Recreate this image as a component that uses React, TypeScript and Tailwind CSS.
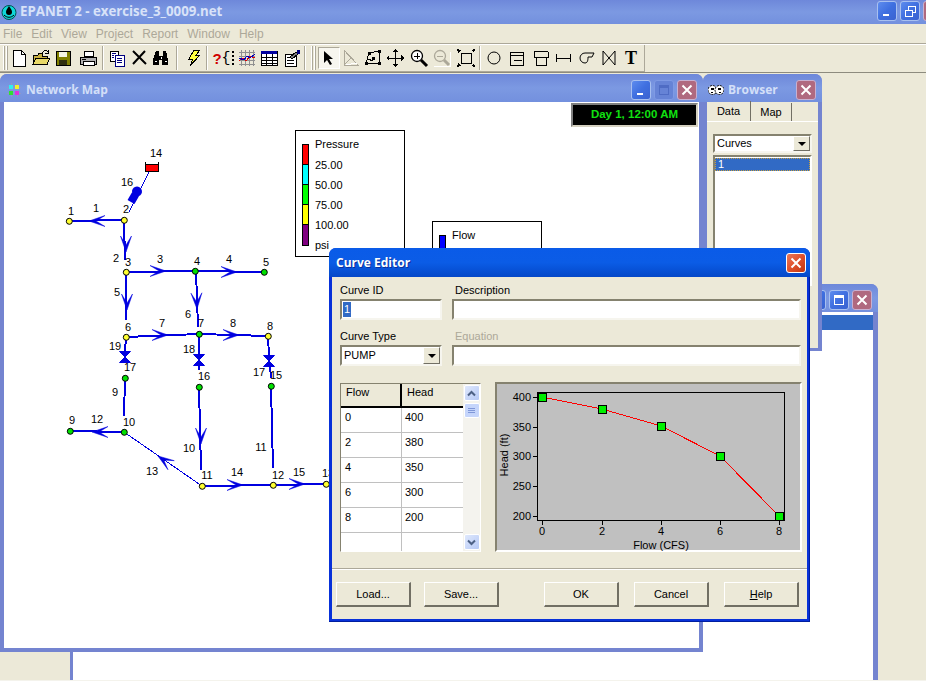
import type { ReactNode } from "react";

const stroke = "#0000e0";

function Icon({ children }: { children: ReactNode }) {
  return (
    <svg width="20" height="20" viewBox="0 0 20 20" shapeRendering="crispEdges">
      {children}
    </svg>
  );
}

function Tool({ className = "", pressed, children }: { className?: string; pressed?: boolean; children: ReactNode }) {
  return (
    <div
      className={`flex h-[22px] w-[22px] shrink-0 items-center justify-center ${
        pressed
          ? "border border-b-white border-l-[#aca899] border-r-white border-t-[#aca899] bg-[#f7f6ef]"
          : ""
      } ${className}`}
    >
      {children}
    </div>
  );
}

function Sep({ className = "" }: { className?: string }) {
  return <div className={`h-[24px] w-[2px] shrink-0 border-l border-r border-l-[#aca899] border-r-white ${className}`} />;
}

function Grip({ className = "" }: { className?: string }) {
  return (
    <div className={`flex h-[24px] w-[5px] shrink-0 justify-between ${className}`}>
      <div className="w-[2px] border-l border-r border-l-white border-r-[#aca899]" />
      <div className="w-[2px] border-l border-r border-l-white border-r-[#aca899]" />
    </div>
  );
}

function Toolbar() {
  return (
    <div className="flex h-[28px] items-center border-t border-t-white">
      <div className="flex h-[27px] w-[645px] items-center border-b border-r border-b-[#aca899] border-r-[#aca899] pl-[3px]">
        <Grip />
        <Tool>
          <Icon>
            <path d="M4 2h8l4 4v12H4z" fill="#fff" stroke="#000" />
            <path d="M12 2v4h4" fill="none" stroke="#000" />
          </Icon>
        </Tool>
        <Tool>
          <Icon>
            <path d="M2 16V7h5l1-2h3v3h5v8z" fill="#c8b040" stroke="#000" />
            <path d="M2 16l3-6h14l-3 6z" fill="#e8d868" stroke="#000" />
            <path d="M11 5c2-3 5-3 6-1M17 2v3h-3" fill="none" stroke="#000" />
          </Icon>
        </Tool>
        <Tool>
          <Icon>
            <path d="M3 3h14v14H3z" fill="#808000" stroke="#000" />
            <path d="M6 4h8v5H6z" fill="#f4f4e4" />
            <path d="M6 12h8v5H6z" fill="#303010" />
          </Icon>
        </Tool>
        <Tool className="ml-[3px]">
          <Icon>
            <path d="M6 3h9v5H6z" fill="#fff" stroke="#000" />
            <path d="M2 9h16v7H2z" fill="#b0b0b0" stroke="#000" />
            <path d="M5 13h11v4H5z" fill="#fff" stroke="#000" />
            <path d="M4 11h4" stroke="#000" />
          </Icon>
        </Tool>
        <Sep className="ml-[3px]" />
        <Tool className="ml-[2px]">
          <Icon>
            <path d="M3 3h8v10H3z" fill="#fff" stroke="#000" />
            <path d="M8 7h9v11H8z" fill="#fff" stroke="#000080" />
            <path d="M5 5h4M5 7h2M5 9h2M10 10h5M10 12h5M10 14h5" stroke="#000080" />
          </Icon>
        </Tool>
        <Tool>
          <Icon>
            <path d="M4 3l13 13M16 3L4 16" stroke="#000" strokeWidth="2" shapeRendering="auto" />
          </Icon>
        </Tool>
        <Tool>
          <Icon>
            <path d="M5 3h3v5h4V3h3l2 9v5h-6v-5H8v5H2v-5z" fill="#000" />
            <path d="M4 13h2M14 13h2M10 9v2" stroke="#fff" />
          </Icon>
        </Tool>
        <Sep className="ml-[4px]" />
        <Tool className="ml-[4px]">
          <Icon>
            <path d="M11 2h6l-4 5h4L7 18l3-7H6z" fill="#ffff40" stroke="#000" />
          </Icon>
        </Tool>
        <Sep className="ml-[2px]" />
        <Tool className="ml-[4px]">
          <span className="font-['Liberation_Sans',sans-serif] text-[15px] font-bold leading-none text-[#d00000]">?</span>
          <span className="font-['Liberation_Mono',monospace] text-[15px] leading-none text-black">{"{"}</span>
          <div className="ml-px h-[14px] border-l-2 border-dotted border-black" />
        </Tool>
        <Tool className="ml-[2px]">
          <Icon>
            <path d="M2 4h16M2 8h16M2 12h16M2 16h16M4 2v16M8 2v16M12 2v16M16 2v16" stroke="#909090" />
            <path d="M2 13l4-3 3 3 4-5 5 2" fill="none" stroke="#e00000" />
            <path d="M2 10l5 2 3-4 3 2 5-4" fill="none" stroke="#0000c0" />
          </Icon>
        </Tool>
        <Tool>
          <Icon>
            <path d="M2 3h16v14H2z" fill="#fff" stroke="#000" />
            <path d="M2 3h16v3H2z" fill="#0000a0" />
            <path d="M2 9h16M2 12h16M2 15h16M7 6v11M13 6v11" stroke="#000" />
          </Icon>
        </Tool>
        <Tool className="ml-px">
          <Icon>
            <path d="M3 6h11v12H3z" fill="#fff" stroke="#000" />
            <path d="M5 9h7M5 12h7M5 15h7" stroke="#000" />
            <path d="M8 9l6-5 2 2-6 5z" fill="#808080" stroke="#000" />
            <path d="M15 2h3v4h-3z" fill="#000080" />
          </Icon>
        </Tool>
        <Sep className="ml-px" />
        <Grip className="ml-[5px]" />
        <Tool pressed className="ml-[2px]">
          <svg width="14" height="16" viewBox="0 0 14 16">
            <path d="M2 1v12l3-3 3 5 2-1-3-5h4z" fill="#000" />
          </svg>
        </Tool>
        <Tool>
          <Icon>
            <path d="M3 2v15h14z" fill="none" stroke="#aca899" />
            <path d="M3 2l7 8-7 7" fill="none" stroke="#aca899" />
            <path d="M5 17l11-2" stroke="#fff" />
          </Icon>
        </Tool>
        <Tool>
          <Icon>
            <path d="M3 15l3-10 11-2-1 12z" fill="none" stroke="#000" />
            <path d="M5 11l5 2" stroke="#000" />
            <path d="M2 14h3v3H2zM5 4h3v3H5zM15 2h3v3h-3zM15 14h3v3h-3zM9 9h3v3H9z" fill="#000" />
          </Icon>
        </Tool>
        <Tool>
          <Icon>
            <path d="M10 2v16M2 10h16" stroke="#000" />
            <path d="M10 1l3 3H7zM10 19l-3-3h6zM1 10l3-3v6zM19 10l-3 3V7z" fill="#000" />
          </Icon>
        </Tool>
        <Tool className="ml-[2px]">
          <Icon>
            <circle cx="8" cy="8" r="5.5" fill="#fff" stroke="#000" strokeWidth="1.3" shapeRendering="auto" />
            <path d="M8 5v6M5 8h6" stroke="#000" />
            <path d="M12 12l6 6" stroke="#000" strokeWidth="3" shapeRendering="auto" />
          </Icon>
        </Tool>
        <Tool className="ml-px">
          <Icon>
            <path d="M2 18h16V4" fill="none" stroke="#fff" />
            <circle cx="8" cy="8" r="5.5" fill="none" stroke="#aca899" strokeWidth="1.3" shapeRendering="auto" />
            <path d="M5 8h6" stroke="#aca899" />
            <path d="M12 12l5 5" stroke="#aca899" strokeWidth="3" shapeRendering="auto" />
          </Icon>
        </Tool>
        <Tool className="ml-[2px]">
          <Icon>
            <path d="M5 5h10v10H5z" fill="none" stroke="#000" />
            <path d="M1 1l4 1-3 3zM19 1l-1 4-3-3zM1 19l1-4 3 3zM19 19l-4-1 3-3z" fill="#000" />
          </Icon>
        </Tool>
        <Sep className="ml-[2px]" />
        <Tool className="ml-[2px]">
          <Icon>
            <circle cx="10" cy="10" r="6" fill="none" stroke="#000" shapeRendering="auto" />
          </Icon>
        </Tool>
        <Tool className="ml-px">
          <Icon>
            <path d="M3 4h13v13H3zM3 7h13M7 12h8" fill="none" stroke="#000" />
          </Icon>
        </Tool>
        <Tool className="ml-[2px]">
          <Icon>
            <path d="M3 4q0-1 1-1h12q1 0 1 1v5H3zM5 9h10v8H5z" fill="none" stroke="#000" />
          </Icon>
        </Tool>
        <Tool>
          <Icon>
            <path d="M3 6v8M17 6v8M3 10h14" stroke="#000" />
          </Icon>
        </Tool>
        <Tool className="ml-px">
          <Icon>
            <path d="M18 5H9a5 5 0 0 0 0 10c3 0 3-4 3-6h4z" fill="none" stroke="#000" shapeRendering="auto" />
          </Icon>
        </Tool>
        <Tool className="ml-px">
          <Icon>
            <path d="M4 3v14l12-14v14z" fill="none" stroke="#000" shapeRendering="auto" />
          </Icon>
        </Tool>
        <Tool>
          <span className="font-['Liberation_Serif',serif] text-[18px] font-bold leading-none text-black">T</span>
        </Tool>
      </div>
    </div>
  );
}

function WinBtn({ kind, tone }: { kind: "min" | "max" | "restore" | "close"; tone: "app" | "child" | "faded" | "active" }) {
  const bg =
    kind === "close"
      ? tone === "active"
        ? "bg-gradient-to-br from-[#e8785a] via-[#e0502a] to-[#c03510] border-white"
        : "bg-[#b0697f] border-[#c8b0d0]"
      : tone === "faded"
        ? "bg-[#6683d6] border-[#7f9ae4]"
        : "bg-gradient-to-br from-[#5e8cee] via-[#3f6fe0] to-[#3a62d0] border-[#a8c0f0]";
  return (
    <div className={`relative flex h-[20px] w-[20px] shrink-0 items-center justify-center rounded-[3px] border ${bg}`}>
      <svg width="14" height="14" viewBox="0 0 14 14" shapeRendering="crispEdges">
        {kind === "min" && <path d="M3 10h6v2H3z" fill="#fff" />}
        {kind === "max" && <path d="M2 2h10v10H2zM3 5v6h8V5z" fill={tone === "faded" ? "#4f6cc4" : "#fff"} fillRule="evenodd" />}
        {kind === "restore" && <path d="M2 6h7v6H2zM5 6V2h7v6H9" fill="none" stroke="#fff" />}
        {kind === "close" && <path d="M2.5 2.5l9 9M11.5 2.5l-9 9" stroke="#fff" strokeWidth="2" shapeRendering="auto" />}
      </svg>
    </div>
  );
}

const inactiveBar = "bg-gradient-to-b from-[#6e88da] via-[#7c99e2] to-[#7390de]";

function ChildWindow({ className, title, icon, buttons, children }: { className: string; title: string; icon: ReactNode; buttons: ReactNode; children: ReactNode }) {
  return (
    <div className={`absolute flex flex-col rounded-t-[7px] bg-[#7484d0] ${className}`}>
      <div className={`flex h-[28px] shrink-0 items-center rounded-t-[7px] pl-[6px] pr-[6px] pt-[3px] ${inactiveBar}`}>
        {icon}
        <span className="ml-[4px] flex-1 font-['Open_Sans',sans-serif] text-[12px] font-bold text-[#d3dff8]">{title}</span>
        <div className="flex gap-[3px]">{buttons}</div>
      </div>
      {children}
    </div>
  );
}

function Legend({ className, title, items, colors }: { className: string; title: string; items: string[]; colors: string[] }) {
  return (
    <div className={`absolute flex border border-black bg-white pl-[6px] pt-[13px] ${className}`}>
      <div className="w-[7px] shrink-0">
        <div className="border border-black">
          {colors.map((c) => (
            <div key={c} className={`h-[20px] border-b border-black last:border-b-0 ${c}`} />
          ))}
        </div>
      </div>
      <div className="-mt-[10px] ml-[6px] text-[11px] leading-[20px] text-black">
        <div className="mb-px">{title}</div>
        {items.map((t) => (
          <div key={t}>{t}</div>
        ))}
      </div>
    </div>
  );
}

type Pt = [number, number];

const pipes: [number, number, number, number, number?][] = [
  [69, 221, 124, 220, 2],
  [124, 220, 125, 260, 2],
  [126, 272, 195, 271, 2],
  [195, 271, 264, 272, 2],
  [126, 272, 126, 320, 2],
  [196, 271, 198, 327, 2],
  [126, 337, 199, 334, 2],
  [199, 334, 268, 336, 2],
  [126, 337, 125, 352, 2],
  [199, 334, 199, 355, 2],
  [268, 336, 269, 356, 2],
  [199, 365, 199, 370, 2],
  [270, 366, 271, 378, 2],
  [125, 378, 124, 416, 2],
  [199, 387, 201, 470, 2],
  [271, 386, 273, 468, 2],
  [70, 431, 124, 432, 2],
  [124, 432, 202, 486, 1],
  [202, 486, 273, 485, 2],
  [273, 485, 327, 484, 2],
  [149, 172, 129, 212, 1],
];

// tip x, tip y, angle in degrees (0 points right)
const arrows: [number, number, number][] = [
  [89, 221, 180],
  [126, 252, 90],
  [166, 271, 0],
  [237, 272, 0],
  [127, 310, 90],
  [197, 309, 88],
  [168, 335, 0],
  [239, 335, 0],
  [201, 444, 90],
  [92, 432, 180],
  [158, 456, 215],
  [243, 485, 0],
  [305, 484, 0],
];

const nodes: [number, number, string][] = [
  [69, 221, "#ffff30"],
  [124, 220, "#ffff30"],
  [126, 272, "#ffff30"],
  [195, 271, "#00e000"],
  [264, 272, "#00e000"],
  [126, 337, "#ffff30"],
  [199, 334, "#00e000"],
  [268, 336, "#ffff30"],
  [125, 378, "#00e000"],
  [199, 387, "#00e000"],
  [271, 386, "#00e000"],
  [124, 432, "#00e000"],
  [70, 431, "#00e000"],
  [202, 486, "#ffff30"],
  [273, 485, "#ffff30"],
  [326, 484, "#ffff30"],
];

const valves: Pt[] = [
  [125, 357],
  [199, 360],
  [269, 361],
];

const labels: [number, number, string][] = [
  [156, 153, "14"], [127, 182, "16"], [71, 211, "1"], [96, 208, "1"], [126, 209, "2"], [116, 258, "2"],
  [128, 262, "3"], [160, 259, "3"], [197, 261, "4"], [229, 259, "4"], [266, 262, "5"], [117, 292, "5"],
  [188, 314, "6"], [128, 327, "6"], [162, 323, "7"], [201, 323, "7"], [233, 323, "8"], [270, 326, "8"],
  [115, 346, "19"], [189, 349, "18"], [130, 367, "17"], [204, 376, "16"], [259, 372, "17"], [276, 375, "15"],
  [115, 392, "9"], [97, 419, "12"], [72, 420, "9"], [129, 422, "10"], [189, 448, "10"], [261, 447, "11"],
  [152, 471, "13"], [207, 475, "11"], [237, 472, "14"], [278, 475, "12"], [299, 472, "15"], [328, 473, "13"],
];

function NetworkDrawing() {
  return (
    <svg width="695" height="545" viewBox="4 102 695 545" className="block">
      <g shapeRendering="crispEdges">
        {pipes.map(([x1, y1, x2, y2, w], i) => (
          <line key={i} x1={x1} y1={y1} x2={x2} y2={y2} stroke={stroke} strokeWidth={w} />
        ))}
      </g>
      {arrows.map(([x, y, a], i) => (
        <path key={i} d="M0 0L-16 -5.5L-7 0L-16 5.5Z" fill={stroke} stroke={stroke} strokeWidth="0.5" transform={`translate(${x} ${y}) rotate(${a})`} />
      ))}
      {valves.map(([x, y], i) => (
        <path key={i} d={`M${x - 5.5} ${y - 5.5}h11l-11 11h11z`} fill={stroke} stroke={stroke} />
      ))}
      {/* pump 16 */}
      <g transform="rotate(-60 135 195)" fill={stroke}>
        <ellipse cx="139" cy="195" rx="5" ry="5" />
        <path d="M127 191h9v8h-9z" />
      </g>
      {/* tank 14 */}
      <path d="M145.5 171.5v-10M158.5 171.5v-10" stroke="#000" shapeRendering="crispEdges" />
      <rect x="145.5" y="164.5" width="13" height="7" fill="#ff0000" stroke="#000" shapeRendering="crispEdges" />
      {nodes.map(([x, y, c], i) => (
        <circle key={i} cx={x + 0.3} cy={y + 0.3} r="3" fill={c} stroke="#000" strokeWidth="1" />
      ))}
      {labels.map(([x, y, t], i) => (
        <text key={i} x={x} y={y + 4} textAnchor="middle" fontSize="11" fill="#000">
          {t}
        </text>
      ))}
    </svg>
  );
}

function Sunken({ className = "", children }: { className?: string; children?: ReactNode }) {
  return (
    <div className={`flex items-center border-2 border-b-[#f6f5ee] border-l-[#85826f] border-r-[#f6f5ee] border-t-[#85826f] bg-white text-[11px] text-black ${className}`}>
      {children}
    </div>
  );
}

function ComboArrow() {
  return (
    <div className="ml-auto flex h-full w-[17px] shrink-0 items-center justify-center border border-b-[#716f64] border-l-white border-r-[#716f64] border-t-white bg-[#ece9d8]">
      <div className="h-0 w-0 border-l-[4px] border-r-[4px] border-t-[4px] border-l-transparent border-r-transparent border-t-black" />
    </div>
  );
}

function DlgButton({ className = "", children }: { className?: string; children: ReactNode }) {
  return (
    <div className={`flex h-[25px] w-[75px] items-center justify-center border border-b-2 border-r-2 border-b-[#716f64] border-l-white border-r-[#716f64] border-t-white text-[11px] text-black ${className}`}>
      {children}
    </div>
  );
}

function ScrollBtn({ up }: { up?: boolean }) {
  return (
    <div className="flex h-[16px] w-[16px] items-center justify-center rounded-[2px] border border-white bg-gradient-to-br from-[#dfe8fc] to-[#b6c9f6]">
      <svg width="9" height="7" viewBox="0 0 9 7">
        <path d={up ? "M1 5.5l3.5-3.5 3.5 3.5" : "M1 1.5l3.5 3.5 3.5-3.5"} fill="none" stroke="#4d6185" strokeWidth="2" />
      </svg>
    </div>
  );
}

const rows = [
  ["0", "400"],
  ["2", "380"],
  ["4", "350"],
  ["6", "300"],
  ["8", "200"],
  ["", ""],
];

function CurveTable() {
  return (
    <div className="mt-px flex h-[169px] w-[141px] shrink-0 border border-b-white border-l-[#85826f] border-r-white border-t-[#85826f] bg-[#f4f3ee]">
      <div className="flex w-[122px] shrink-0 flex-col overflow-hidden bg-white text-[11px] text-black">
        <div className="flex h-[24px] shrink-0 border-b-2 border-black bg-[#ece9d8]">
          <div className="w-[61px] border-r-2 border-black pl-[5px]">Flow</div>
          <div className="pl-[5px]">Head</div>
        </div>
        {rows.map(([f, h], i) => (
          <div key={i} className="flex h-[25px] shrink-0 border-b border-[#c0c0c0] leading-[19px]">
            <div className="w-[61px] border-r border-[#c0c0c0] pl-[4px]">{f}</div>
            <div className="pl-[3px]">{h}</div>
          </div>
        ))}
      </div>
      <div className="flex flex-1 flex-col items-center justify-between py-px">
        <div>
          <ScrollBtn up />
          <div className="mt-[2px] flex h-[15px] w-[16px] flex-col items-center justify-center gap-px rounded-[2px] border border-white bg-[#c5d5fb]">
            <div className="h-px w-[7px] bg-[#7f97d8]" />
            <div className="h-px w-[7px] bg-[#7f97d8]" />
            <div className="h-px w-[7px] bg-[#7f97d8]" />
          </div>
        </div>
        <ScrollBtn />
      </div>
    </div>
  );
}

const curve: Pt[] = [
  [542, 397],
  [602, 409],
  [661, 426],
  [720, 456],
  [779, 516],
];
const yTicks: [string, number][] = [
  ["400", 397],
  ["350", 427],
  ["300", 456],
  ["250", 486],
  ["200", 516],
];

function CurveChart() {
  return (
    <div className="h-[170px] flex-1 border-2 border-b-white border-l-[#85826f] border-r-white border-t-[#85826f] bg-[#c0c0c0]">
      <svg width="303" height="166" viewBox="497 384 303 166" className="block overflow-visible" fontSize="11" fill="#000">
        <g shapeRendering="crispEdges">
          <rect x="537.5" y="392.5" width="247" height="128" fill="#c0c0c0" stroke="#000" />
          {yTicks.map(([, y]) => (
            <line key={y} x1="533" x2="537" y1={y + 0.5} y2={y + 0.5} stroke="#000" />
          ))}
          {curve.map(([x]) => (
            <line key={x} x1={x + 0.5} x2={x + 0.5} y1="521" y2="525" stroke="#000" />
          ))}
          <polyline points={curve.map(([x, y]) => `${x},${y}`).join(" ")} fill="none" stroke="#ff0000" />
          {curve.map(([x, y]) => (
            <rect key={x} x={x - 3.5} y={y - 3.5} width="8" height="8" fill="#00f000" stroke="#000" />
          ))}
        </g>
        {yTicks.map(([t, y]) => (
          <text key={t} x="531" y={y + 4} textAnchor="end">
            {t}
          </text>
        ))}
        {["0", "2", "4", "6", "8"].map((t, i) => (
          <text key={t} x={curve[i][0]} y="535" textAnchor="middle">
            {t}
          </text>
        ))}
        <text x="661" y="549" textAnchor="middle">
          Flow (CFS)
        </text>
        <text x="508" y="455" textAnchor="middle" transform="rotate(-90 508 455)">
          Head (ft)
        </text>
      </svg>
    </div>
  );
}

function CurveEditor() {
  return (
    <div className="absolute left-[329px] top-[175px] flex h-[374px] w-[481px] flex-col rounded-t-[7px] bg-[#0831d9] shadow-[inset_-1px_-1px_0_#001ea0]">
      <div className="flex h-[29px] shrink-0 items-center rounded-t-[7px] bg-gradient-to-b from-[#0a5be8] via-[#0b5ce6] to-[#0548c8] pl-[7px] pr-[4px]">
        <span className="flex-1 font-['Open_Sans',sans-serif] text-[12px] font-bold text-white [text-shadow:1px_1px_0_#0a2f9c]">Curve Editor</span>
        <WinBtn kind="close" tone="active" />
      </div>
      <div className="mx-[3px] mb-[3px] flex flex-1 flex-col bg-[#ece9d8] text-[11px] text-black">
        <div className="grid grid-cols-[102px_349px] gap-x-[10px] pl-[8px] pt-[5px]">
          <div className="h-[17px]">Curve ID</div>
          <div className="h-[17px] pl-[3px]">Description</div>
          <Sunken className="h-[21px] pl-[1px]">
            <span className="bg-[#316ac5] px-px leading-[15px] text-white">1</span>
          </Sunken>
          <Sunken className="h-[21px]" />
          <div className="mt-[8px] h-[17px]">Curve Type</div>
          <div className="mt-[8px] h-[17px] pl-[3px] text-[#aca899]">Equation</div>
          <Sunken className="h-[21px] pl-[2px]">
            PUMP
            <ComboArrow />
          </Sunken>
          <Sunken className="h-[21px]" />
        </div>
        <div className="mt-[16px] flex gap-[14px] pl-[8px] pr-[6px]">
          <CurveTable />
          <CurveChart />
        </div>
        <div className="mt-[16px] border-b border-t border-b-white border-t-[#aca899]" />
        <div className="flex pl-[4px] pt-[12px]">
          <DlgButton>Load...</DlgButton>
          <DlgButton className="ml-[13px]">Save...</DlgButton>
          <DlgButton className="ml-[45px]">OK</DlgButton>
          <DlgButton className="ml-[15px]">Cancel</DlgButton>
          <DlgButton className="ml-[15px]">
            <span>
              <span className="underline">H</span>elp
            </span>
          </DlgButton>
        </div>
      </div>
    </div>
  );
}

function AppIcon() {
  return (
    <svg width="16" height="16" viewBox="0 0 16 16" className="shrink-0">
      <circle cx="8" cy="8.5" r="7" fill="#10d8d8" stroke="#005050" />
      <path d="M8 2c2 3 3 4 3 6a3 3 0 0 1-6 0c0-2 1-3 3-6z" fill="#000" />
      <path d="M3 11c3 3 7 3 10 0" fill="none" stroke="#000" />
    </svg>
  );
}

function MapIcon() {
  return (
    <svg width="16" height="16" viewBox="0 0 16 16" className="shrink-0" shapeRendering="crispEdges">
      <path d="M5 1v14M11 1v14M1 5h14M1 11h14" stroke="#9098c8" />
      <path d="M3 3h4v4H3z" fill="#30f0f0" />
      <path d="M9 3h4v4H9z" fill="#f0f030" />
      <path d="M3 9h4v4H3z" fill="#30e030" />
      <path d="M9 9h4v4H9z" fill="#e030e0" />
    </svg>
  );
}

function BrowserIcon() {
  return (
    <svg width="16" height="12" viewBox="0 0 16 12" className="-ml-px shrink-0">
      <circle cx="4.5" cy="6" r="4.5" fill="#fff" stroke="#000" strokeDasharray="2 1" />
      <circle cx="11.5" cy="6" r="4.5" fill="#fff" stroke="#000" strokeDasharray="2 1" />
      <path d="M3 4h3v2H3zM10 4h3v2h-3zM3 8h2v1H3zM11 8h2v1h-2z" fill="#000" />
    </svg>
  );
}

export default function App() {
  return (
    <div className="flex h-[681px] w-[926px] flex-col overflow-hidden bg-[#f4f3ec] font-['Liberation_Sans',sans-serif]">
      {/* App title bar */}
      <div className={`flex h-[24px] shrink-0 items-center pl-[1px] ${inactiveBar}`}>
        <AppIcon />
        <span className="ml-[3px] flex-1 font-['Open_Sans',sans-serif] text-[13.25px] font-bold text-[#d8e2f8]">EPANET 2 - exercise_3_0009.net</span>
        <div className="-mr-[17px] mb-[3px] flex gap-[3px]">
          <WinBtn kind="min" tone="app" />
          <WinBtn kind="restore" tone="app" />
          <WinBtn kind="close" tone="app" />
        </div>
      </div>

      {/* Menu */}
      <div className="flex h-[20px] shrink-0 items-center gap-[9px] border-b border-b-[#aca899] bg-[#ece9d8] pl-[3px] text-[12px] text-[#aca899]">
        <span>File</span>
        <span>Edit</span>
        <span>View</span>
        <span>Project</span>
        <span>Report</span>
        <span>Window</span>
        <span>Help</span>
      </div>

      <div className="shrink-0 border-b border-b-[#8d8b7e] bg-[#ece9d8]">
        <Toolbar />
      </div>

      {/* MDI workspace, the windows sit freely on it */}
      <div className="relative h-[607px] shrink-0 overflow-hidden bg-[#ece9d8]">
        <ChildWindow
          className="left-[70px] top-[211px] h-[420px] w-[808px]"
          title=""
          icon={null}
          buttons={
            <>
              <WinBtn kind="min" tone="child" />
              <WinBtn kind="max" tone="child" />
              <WinBtn kind="close" tone="child" />
            </>
          }
        >
          <div className="ml-[3px] mr-[5px] flex flex-1 flex-col bg-white pt-[3px]">
            <div className="h-[15px] bg-[#316ac5]" />
          </div>
        </ChildWindow>

        <ChildWindow
          className="left-0 top-[1px] h-[578px] w-[703px]"
          title="Network Map"
          icon={<MapIcon />}
          buttons={
            <>
              <WinBtn kind="min" tone="child" />
              <WinBtn kind="max" tone="faded" />
              <WinBtn kind="close" tone="child" />
            </>
          }
        >
          <div className="relative mx-[4px] mb-[4px] flex-1 overflow-hidden bg-white">
            <NetworkDrawing />
            <Legend
              className="left-[291px] top-[28px] h-[127px] w-[110px]"
              title="Pressure"
              items={["25.00", "50.00", "75.00", "100.00", "psi"]}
              colors={["bg-[#ff0000]", "bg-[#00ffff]", "bg-[#00ff00]", "bg-[#ffff00]", "bg-[#800080]"]}
            />
            {/* the dialog hides all of this legend below its first row */}
            <Legend
              className="left-[428px] top-[119px] h-[40px] w-[110px]"
              title="Flow"
              items={[]}
              colors={["bg-[#0000ff]"]}
            />
            <div className="absolute left-[567px] top-px flex h-[24px] w-[127px] items-center justify-center border-2 border-b-[#d4d0c0] border-l-[#808080] border-r-[#d4d0c0] border-t-[#808080] bg-black text-[11.5px] font-bold text-[#10e010]">
              Day 1, 12:00 AM
            </div>
          </div>
        </ChildWindow>

        <ChildWindow
          className="left-[703px] top-[1px] h-[277px] w-[119px]"
          title="Browser"
          icon={<BrowserIcon />}
          buttons={<WinBtn kind="close" tone="child" />}
        >
          <div className="mx-[4px] mb-[3px] flex flex-1 flex-col bg-[#ece9d8] text-[11px] text-black">
            <div className="flex h-[20px] shrink-0 items-end border-b border-b-white">
              <div className="flex h-[20px] w-[44px] items-center justify-center border-r border-r-[#716f64]">Data</div>
              <div className="flex h-[18px] w-[41px] items-center justify-center border-r border-r-[#716f64]">Map</div>
            </div>
            <div className="px-[6px] pt-[12px]">
              <Sunken className="h-[19px] pl-[2px]">
                Curves
                <ComboArrow />
              </Sunken>
              <div className="mt-[2px] h-[131px] border-2 border-b-white border-l-[#85826f] border-r-white border-t-[#85826f] bg-white pt-px">
                <div className="h-[13px] border border-dotted border-[#c8a040] bg-[#316ac5] pl-[2px] text-[11px] leading-[11px] text-white">1</div>
              </div>
            </div>
          </div>
        </ChildWindow>

        <CurveEditor />
      </div>
    </div>
  );
}
